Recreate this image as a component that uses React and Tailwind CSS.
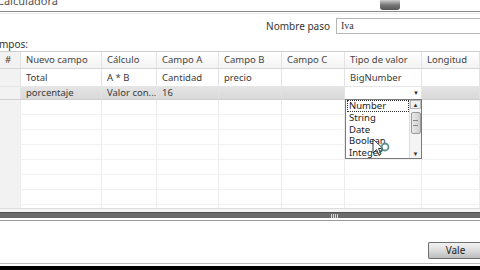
import React from 'react';

const cols = [21, 81, 55, 62, 63, 63, 77, 58];
const gridCols = 'grid grid-cols-[21px_81px_55px_62px_63px_63px_77px_58px]';

const header = ['#', 'Nuevo campo', 'Cálculo', 'Campo A', 'Campo B', 'Campo C', 'Tipo de valor', 'Longitud'];
const rows = [
  ['', 'Total', 'A * B', 'Cantidad', 'precio', '', 'BigNumber', ''],
];

const Cell = ({ children, first, className = '' }) => (
  <div
    className={`border-r border-[#e3e3e3] overflow-hidden whitespace-nowrap pl-[5px] ${
      first ? 'bg-[#f2f2f2] pl-[3px]' : ''
    } ${className}`}
  >
    {children}
  </div>
);

const PointerCursor = () => (
  <svg width="20" height="22" viewBox="0 0 20 22" className="absolute left-[371px] top-[86px]">
    <path d="M2 1 L2 15 L5.5 11.5 L8 17 L10 16 L7.5 10.5 L12 10.5 Z" fill="#fff" stroke="#222" strokeWidth="0.9" />
    <circle cx="14" cy="9" r="3.5" fill="none" stroke="#5a8f8a" strokeWidth="1.8" />
    <path d="M11.5 11.5 L8.5 15" stroke="#3d6e6a" strokeWidth="2" />
  </svg>
);

const Dropdown = () => (
  <div className="absolute left-[345px] top-[47px] w-[77px] h-[60px] bg-white border border-[#7a7a7a] flex">
    <div className="flex-1 flex flex-col text-[9.5px] leading-[11.5px] text-[#222] pl-[1px] overflow-hidden">
      <div className="border border-dotted border-[#333] pl-[1px] leading-[10px]">Number</div>
      <div className="pl-[2px]">String</div>
      <div className="pl-[2px]">Date</div>
      <div className="pl-[2px]">Boolean</div>
      <div className="pl-[2px]">Integer</div>
    </div>
    <div className="w-[12px] border-l border-[#dcdcdc] bg-[#f4f4f4] flex flex-col items-center">
      <div className="w-[11px] h-[9px] border border-[#b8b8b8] bg-[#f0f0f0] flex items-center justify-center text-[6px] text-[#333] leading-none">▲</div>
      <div className="mt-[3px] w-[10px] h-[22px] border border-[#9a9a9a] rounded-[2px] bg-gradient-to-r from-[#e9e9e9] to-[#cfcfcf] flex items-center justify-center">
        <div className="w-[5px] h-[6px] border-y border-[#888]" />
      </div>
      <div className="mt-auto w-[11px] h-[8px] flex items-center justify-center text-[6px] text-[#333] leading-none">▼</div>
    </div>
  </div>
);

export default function App() {
  const emptyRows = Array.from({ length: 7 });
  return (
    <div className="w-[480px] h-[270px] overflow-hidden bg-white relative flex flex-col text-[#3a3a3a] font-['Noto_Sans','Open_Sans',sans-serif] text-[9.5px]">
      {/* title strip */}
      <div className="h-[11px] flex items-end relative">
        <span className="ml-[-3px] -mb-[1px] text-[11px] leading-[14px] text-[#555] -translate-y-[4px]">Calculadora</span>
        <div className="absolute left-[380px] top-0 w-[20px] h-[10px] rounded-b-[3px] bg-gradient-to-b from-[#d0d0d0] via-[#777] to-[#555]" />
      </div>
      <div className="h-px bg-[#8a8a8a]" />
      <div className="h-px mt-[1px] bg-[#ececec]" />

      {/* nombre paso */}
      <div className="mt-[4px] flex items-center justify-end h-[16px]">
        <span className="text-[10px] text-[#333] mr-[6px]">Nombre paso</span>
        <div className="w-[144px] h-[16px] border border-[#b5b5b5] border-r-0 pl-[4px] text-[10px] leading-[14px] text-[#333] font-['Liberation_Serif',serif]">
          Iva
        </div>
      </div>

      <div className="mt-[4px] ml-[-13px] text-[10px] leading-[12px] text-[#333]">Campos:</div>

      {/* table */}
      <div className="mt-[1px] relative flex-none h-[157px] border-t border-[#cfcfcf] flex flex-col">
        <div className={`${gridCols} h-[17px] leading-[16px] border-b border-[#d6d6d6] bg-gradient-to-b from-white to-[#f3f3f3] text-[#444]`}>
          {header.map((h, i) => (
            <Cell key={i} first={i === 0} className="border-[#d0d0d0]">
              {h}
            </Cell>
          ))}
        </div>
        {rows.map((r, ri) => (
          <div key={ri} className={`${gridCols} h-[18px] leading-[18px] border-b border-[#e6e6e6]`}>
            {r.map((c, i) => (
              <Cell key={i} first={i === 0}>
                {c}
              </Cell>
            ))}
          </div>
        ))}
        <div className={`${gridCols} h-[13px] leading-[12px] bg-gradient-to-b from-[#e4e4e4] to-[#d9d9d9] border-b border-[#cfcfcf]`}>
          <Cell first className="bg-[#e2e2e2]" />
          <Cell>porcentaje</Cell>
          <Cell>Valor con...</Cell>
          <Cell>16</Cell>
          <Cell />
          <Cell />
          <div className="bg-white flex justify-end border-r border-[#e3e3e3]">
            <div className="w-[10px] flex items-center justify-center text-[6px] text-[#333]">▼</div>
          </div>
          <Cell />
        </div>
        {emptyRows.map((_, ri) => (
          <div key={ri} className={`${gridCols} h-[15px] border-b border-[#f1f1f1]`}>
            {cols.map((w, i) => (
              <Cell key={i} first={i === 0} className="border-[#ececec]" />
            ))}
          </div>
        ))}
        <div className={`${gridCols} flex-1`}>
          {cols.map((w, i) => (
            <Cell key={i} first={i === 0} className="border-[#ececec]" />
          ))}
        </div>
        <Dropdown />
        <PointerCursor />
      </div>

      {/* horizontal scrollbar */}
      <div className="h-px bg-[#dcdcdc]" />
      <div className="h-[3px] bg-[#f4f4f4]" />
      <div className="h-[6px] bg-[#6a6a6a] relative border-t border-[#505050]">
        <div className="absolute left-[331px] top-[1px] flex gap-[1px]">
          <div className="w-px h-[4px] bg-[#d8d8d8]" />
          <div className="w-px h-[4px] bg-[#d8d8d8]" />
          <div className="w-px h-[4px] bg-[#d8d8d8]" />
          <div className="w-px h-[4px] bg-[#d8d8d8]" />
        </div>
      </div>
      <div className="h-[2px] bg-white" />
      <div className="h-px bg-[#9a9a9a]" />

      {/* bottom */}
      <div className="flex-1 flex items-start justify-end pt-[21px]">
        <div className="w-[52px] h-[17px] border border-[#707070] rounded-l-[2px] border-r-0 bg-gradient-to-b from-[#f2f2f2] via-[#dcdcdc] to-[#bdbdbd] flex items-center justify-center text-[10px] text-[#222] pl-[2px]">
          Vale
        </div>
      </div>
      <div className="h-px bg-[#bdbdbd]" />
      <div className="h-[2px] bg-white" />
      <div className="h-[4px] bg-black" />
    </div>
  );
}
